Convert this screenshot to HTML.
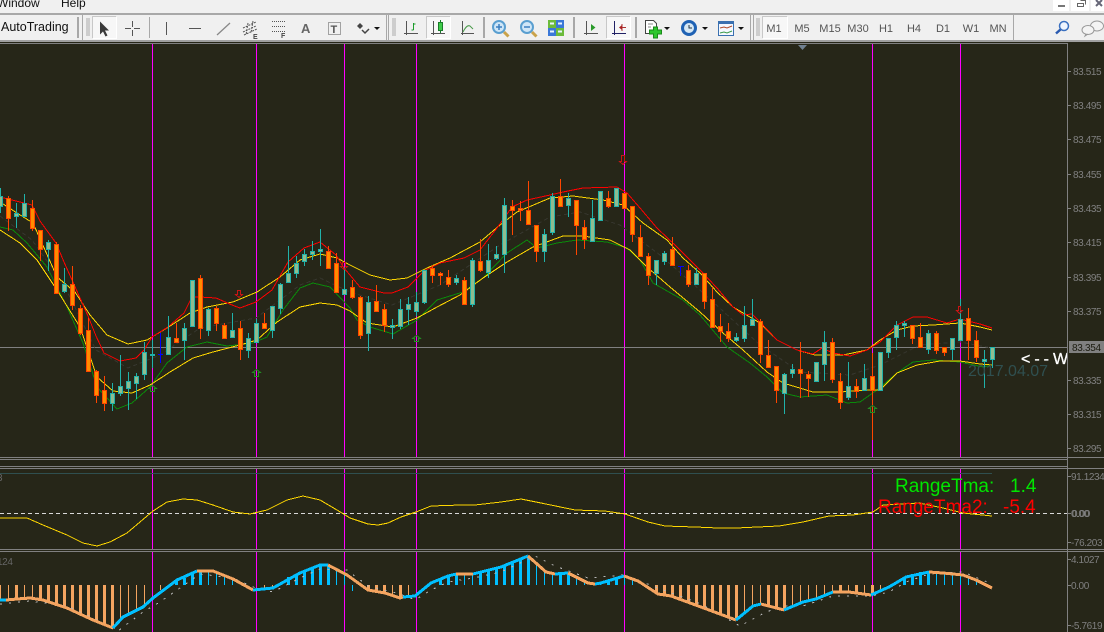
<!DOCTYPE html>
<html><head><meta charset="utf-8"><title>Chart</title>
<style>
html,body{margin:0;padding:0;background:#262618;overflow:hidden}
svg{display:block;position:absolute;left:0;top:0}
text{font-family:"Liberation Sans",sans-serif}
.ax{font-size:10px;fill:#808080;letter-spacing:-.4px}
.tf{font-size:11px;fill:#555}
</style></head><body>
<svg width="1104" height="632" viewBox="0 0 1104 632" xmlns="http://www.w3.org/2000/svg">
<defs><clipPath id="cc"><rect x="0" y="44" width="1067" height="414"/></clipPath></defs>
<rect width="1104" height="632" fill="#262618"/>
<!-- top chrome -->
<rect width="1104" height="41" fill="#f0f0f0"/>
<rect y="13" width="1104" height="2" fill="#a8a8a8"/>
<rect y="40" width="1104" height="2" fill="#a0a0a0"/>
<rect x="0" y="43" width="1068" height="1" fill="#808080"/>
<rect x="1053" y="0" width="16" height="11" fill="#fff"/><rect x="1071" y="0" width="18" height="11" fill="#fff"/><rect x="1091" y="0" width="13" height="11" fill="#fff"/>
<rect x="1058" y="5" width="7" height="2" fill="#777"/>
<path d="M1077.5 3.5h6v3h-6zM1080.5 .5h5v4" fill="none" stroke="#666"/>
<path d="M1096 0l6 6M1102 0l-6 6" stroke="#667" stroke-width="2"/>
<text x="-3" y="7" font-size="12" fill="#111">Window</text>
<text x="61" y="7" font-size="12" fill="#111">Help</text>
<text x="1" y="31" font-size="12.5" fill="#111">AutoTrading</text>
<g fill="#a8a8a8"><rect x="77" y="17" width="2" height="21"/><rect x="82" y="15" width="1" height="25"/><rect x="149" y="17" width="1" height="21"/><rect x="386" y="15" width="1" height="25"/><rect x="388" y="15" width="1" height="25"/><rect x="483" y="17" width="2" height="21"/><rect x="573" y="17" width="2" height="21"/><rect x="635" y="17" width="2" height="21"/><rect x="750" y="15" width="1" height="25"/><rect x="753" y="15" width="1" height="25"/><rect x="1013" y="15" width="1" height="25"/></g>
<path d="M86 19h4M86 21h4M86 23h4M86 25h4M86 27h4M86 29h4M86 31h4M86 33h4M86 35h4M392 19h4M392 21h4M392 23h4M392 25h4M392 27h4M392 29h4M392 31h4M392 33h4M392 35h4M756 19h4M756 21h4M756 23h4M756 25h4M756 27h4M756 29h4M756 31h4M756 33h4M756 35h4" stroke="#aaa" stroke-width="1"/>
<g fill="#f7f7f7"><rect x="92" y="16" width="25" height="23"/><rect x="426" y="16" width="25" height="23"/><rect x="606" y="16" width="25" height="23"/><rect x="762" y="16" width="26" height="23"/></g>
<path d="M92.500 38.500v-22h24M426.500 38.500v-22h24M606.500 38.500v-22h24M762.500 38.500v-22h25" fill="none" stroke="#c8c8c8"/>
<path d="M116.500 16.500v22h-24M450.500 16.500v22h-24M630.500 16.500v22h-24M787.500 16.500v22h-25" fill="none" stroke="#fff"/>
<!-- drawing tool icons -->
<path d="M100 21.500v13l3-3 2.500 5 2-1-2.500-5h4z" fill="#3a3a3a"/>
<path d="M125 28.500h6M134 28.500h6M132.500 21v6M132.500 30v6M166.500 22v13M189 28.500h12" stroke="#555" fill="none"/>
<path d="M217 35l13-12" stroke="#888" stroke-width="1.300" fill="none"/>
<path d="M243 28l13-6M243 32l13-6M244 35l13-6M248 23l-2 12M253 21l-2 12" stroke="#555" stroke-dasharray="2 1" fill="none"/>
<text x="253" y="39" font-size="7" font-weight="bold" fill="#444">E</text>
<path d="M272 21.500h13M272 26.500h13M272 31.500h13" stroke="#555" stroke-dasharray="1 1" fill="none"/>
<text x="281" y="38" font-size="7" font-weight="bold" fill="#444">F</text>
<text x="301" y="33" font-size="13" font-weight="bold" fill="#666">A</text>
<rect x="328.500" y="22.500" width="12" height="12" fill="none" stroke="#555" stroke-dasharray="1 1"/>
<text x="330.500" y="33" font-size="11" font-weight="bold" fill="#555">T</text>
<path d="M360 23l3 3-3 3-3-3z" fill="#444"/><path d="M362 30l3 3 4-4" fill="none" stroke="#444" stroke-width="1.500"/>
<path d="M374 27h6l-3 3z" fill="#111"/>
<!-- chart mode icons -->
<g stroke="#555" fill="none"><path d="M406.500 21v14M404 33.500h14M433.500 21v14M431 33.500h14M462.500 21v14M461 33.500h13M586.500 21v14M584 33.500h14"/></g>
<path d="M413.500 23v7M413.500 24h2M411.500 30h2" stroke="#1a9c2a" fill="none"/>
<path d="M440.500 20v3M440.500 31v2" stroke="#1a7c2a"/><rect x="438.500" y="22.500" width="4" height="8" fill="#3fcc4a" stroke="#1a7c2a"/>
<path d="M463 32c3-6 5-7 7-6l3 3" stroke="#4a9a4a" fill="none"/>
<path d="M591 24l4.500 3.500-4.500 3.500z" fill="#2a9a2a"/>
<path d="M614.500 21v14M612 33.500h14" stroke="#226" fill="none"/><path d="M622 24v7M622 27.500h4" stroke="#a33"/><path d="M622 25l-3 2.500 3 2.500z" fill="#a22"/>
<!-- zoom icons -->
<g><circle cx="499" cy="27" r="6" fill="#cfe6f7" stroke="#5a9fd0" stroke-width="2"/><path d="M504 32l4.500 4.500" stroke="#c9a24a" stroke-width="3"/><path d="M496 27h6M499 24v6" stroke="#3a7fc0" stroke-width="1.500"/>
<circle cx="527" cy="27" r="6" fill="#cfe6f7" stroke="#5a9fd0" stroke-width="2"/><path d="M532 32l4.500 4.500" stroke="#c9a24a" stroke-width="3"/><path d="M524 27h6" stroke="#3a7fc0" stroke-width="1.500"/></g>
<g><rect x="548" y="20" width="8" height="8" fill="#6cbb3c"/><rect x="556" y="20" width="8" height="8" fill="#3a78d8"/><rect x="548" y="28" width="8" height="8" fill="#3a78d8"/><rect x="556" y="28" width="8" height="8" fill="#6cbb3c"/><path d="M550 23.500h4M558 23.500h4M550 31.500h4M558 31.500h4" stroke="#e8f4ff" stroke-width="2"/></g>
<!-- new/clock/template -->
<path d="M645.500 20.500h8l3 3v10h-11z" fill="#fff" stroke="#444"/><path d="M648 24h5M648 27h3" stroke="#888"/>
<path d="M653.500 27h4v3h4v4h-4v4h-4v-4h-4v-4h4z" fill="#2fc72f" stroke="#1a8a1a"/>
<path d="M664 27h6l-3 3z" fill="#111"/>
<circle cx="689" cy="28" r="8" fill="#1f62b4"/><circle cx="689" cy="28" r="5" fill="#d6e8f5"/><path d="M689 25v3h3" stroke="#234" fill="none"/>
<path d="M702 27h6l-3 3z" fill="#111"/>
<rect x="718.500" y="21.500" width="15" height="14" fill="#f4f8ff" stroke="#3a70b0"/><rect x="719" y="22" width="14" height="2" fill="#3a70b0"/>
<path d="M720 28l4-1 3 1 5-2" stroke="#b04a2a" fill="none"/><path d="M720 33l4-1 3 1 5-2" stroke="#3a9a4a" fill="none"/>
<path d="M738 27h6l-3 3z" fill="#111"/>
<!-- timeframe labels -->
<text class="tf" x="774" y="32" text-anchor="middle">M1</text>
<text class="tf" x="802" y="32" text-anchor="middle">M5</text>
<text class="tf" x="830" y="32" text-anchor="middle">M15</text>
<text class="tf" x="858" y="32" text-anchor="middle">M30</text>
<text class="tf" x="886" y="32" text-anchor="middle">H1</text>
<text class="tf" x="914" y="32" text-anchor="middle">H4</text>
<text class="tf" x="943" y="32" text-anchor="middle">D1</text>
<text class="tf" x="971" y="32" text-anchor="middle">W1</text>
<text class="tf" x="998" y="32" text-anchor="middle">MN</text>
<ellipse cx="1064" cy="26" rx="4.500" ry="4.500" fill="#eef5ff" stroke="#3a70c0" stroke-width="1.500"/><path d="M1060.500 29.500l-4.500 4" stroke="#2a5ab0" stroke-width="2.500"/>
<ellipse cx="1097" cy="26" rx="6.500" ry="5" fill="#f4f4f4" stroke="#999"/><ellipse cx="1088" cy="30" rx="6" ry="4.500" fill="#f4f4f4" stroke="#999"/><path d="M1086 34l-1 2 3-2" fill="none" stroke="#999"/>
<!-- panels -->
<rect x="0" y="44" width="1104" height="588" fill="#262618"/>
<rect y="43" width="1068" height="1" fill="#808080"/>
<path d="M798 45h9l-4.500 5z" fill="#708090"/>
<g shape-rendering="crispEdges">
<!-- magenta period separators -->
<path d="M152.500 44V458M256.500 44V458M344.500 44V458M416.500 44V458M624.500 44V458M872.500 44V458M960.500 44V458M152.500 469V549M256.500 469V549M344.500 469V549M416.500 469V549M624.500 469V549M872.500 469V549M960.500 469V549M152.500 552V632M256.500 552V632M344.500 552V632M416.500 552V632M624.500 552V632M872.500 552V632M960.500 552V632" stroke="#ff00ff" fill="none"/>
<!-- frames -->
<path d="M1067.500 43V632" stroke="#808080" fill="none"/>
<path d="M0 457.500H1104M0 459.500H1067M0 466.500H1067M0 468.500H1104M0 549.500H1104M0 551.500H1104" stroke="#808080" fill="none"/>
<path d="M0 473.500H992" stroke="#2f4f4f" fill="none"/>
<path d="M1067 71.500h4M1067 105.500h4M1067 139.500h4M1067 174.500h4M1067 208.500h4M1067 242.500h4M1067 277.500h4M1067 311.500h4M1067 380.500h4M1067 414.500h4M1067 448.500h4M1067 476.500h4M1067 513.500h4M1067 542.500h4M1067 559.500h4M1067 585.500h4M1067 625.500h4" stroke="#808080" fill="none"/>
<!-- bid line -->
<path d="M0 347.500H1067" stroke="#808080" fill="none"/>
<!-- faint mid line -->
<path d="M0 216L32 240 64 285 96 350 128 368 160 355 200 328 256 318 300 285 320 278 350 292 392 305 440 285 500 245 550 217 580 212 620 225 660 255 700 290 760 345 800 372 850 375 880 365 920 345 960 342 992 348" fill="none" stroke="#36362e" stroke-dasharray="4 3"/>
<!-- green MA -->
<polyline fill="none" stroke="#0a8a0a" points="0,227 13,230 27,243 47,267 67,307 83,343 97,387 117,409 132,403 150,387 167,363 187,347 207,342 227,346 253,343 267,337 283,310 300,288 313,283 330,287 350,308 357,320 370,327 393,334 417,320 437,300 463,292 483,278 507,253 527,240 537,248 557,243 577,240 607,242 627,248 640,260 653,283 683,300 700,315 727,347 750,363 767,377 783,393 800,397 827,395 847,403 860,402 877,390 897,373 913,362 933,360 960,362 983,367 992,365"/>
<!-- yellow MAs -->
<polyline fill="none" stroke="#ffd700" points="0,230 20,243 37,260 57,290 80,327 97,377 113,391 132,393 150,385 170,372 193,358 213,352 240,345 257,340 277,322 300,307 320,303 337,305 350,311 367,323 393,327 417,318 437,307 460,295 483,278 507,262 533,247 563,236 583,236 610,240 630,250 647,267 670,287 700,312 723,333 743,350 767,372 783,383 813,392 840,392 867,390 880,390 897,373 917,365 940,361 960,361 980,364 992,365"/>
<polyline fill="none" stroke="#ffd700" points="0,202 17,213 33,223 57,277 75,292 90,315 107,335 128,344 147,340 167,328 190,313 207,307 233,302 257,292 280,277 300,260 320,254 337,258 350,265 370,275 390,280 407,278 427,268 450,258 480,242 500,225 517,212 550,198 573,196 603,200 623,205 643,223 667,240 683,258 700,273 717,292 733,307 760,323 777,340 797,350 815,355 843,355 867,350 880,340 897,330 913,326 933,325 960,323 980,327 992,330"/>
<!-- red MA -->
<polyline fill="none" stroke="#ff0000" points="0,197 16,201 32,205 40,221 56,243 64,262 72,280 88,316 96,336 104,353 120,361 136,358 144,350 152,337 168,327 184,313 192,297 200,297 216,298 232,305 240,308 256,302 272,290 288,262 304,248 320,242 336,255 344,268 360,287 384,293 392,293 408,287 424,271 440,263 464,258 480,250 497,228 512,207 527,200 550,195 563,192 583,188 617,187 627,193 640,208 657,228 677,247 700,270 717,288 733,307 743,315 752,314 760,322 777,340 797,350 813,354 822,348 833,353 850,356 867,350 880,342 897,325 913,317 927,317 947,323 960,319 980,324 992,328"/>
<!-- candle wicks -->
<path stroke="#20b2aa" fill="none" d="M.5 188V213M16.500 203V228M24.500 194V216M48.500 240V271M64.500 268V293M112.500 383V411M120.500 355V396M128.500 372V410M136.500 373V399M144.500 342V380M152.500 340V368M168.500 316V354M184.500 323V360M192.500 280V326M208.500 308V336M232.500 313V337M248.500 333V358M256.500 319V342M272.500 306V338M280.500 283V314M288.500 246V282M296.500 256V278M304.500 249V266M312.500 241V260M320.500 229V266M344.500 267V294M368.500 296V351M392.500 319V339M400.500 299V329M408.500 297V325M416.500 292V316M424.500 270V304M456.500 275V285M472.500 258V307M488.500 244V278M496.500 246V260M504.500 198V273M544.500 229V262M552.500 193V235M568.500 193V217M592.500 200V241M600.500 191V220M616.500 188V206M656.500 260V285M664.500 251V265M696.500 268V284M736.500 333V342M744.500 306V342M752.500 299V325M784.500 373V414M792.500 364V378M816.500 362V381M824.500 331V381M848.500 362V400M864.500 364V390M880.500 352V390M888.500 338V358M896.500 321V350M904.500 321V337M928.500 330V354M952.500 338V360M960.500 299V340M984.500 350V388M992.500 347V368"/>
<path stroke="#ff4500" fill="none" d="M8.500 196V231M32.500 200V231M40.500 230V261M56.500 242V293M72.500 266V310M80.500 305V335M88.500 318V371M96.500 370V403M104.500 376V411M176.500 323V343M200.500 275V339M216.500 306V331M224.500 323V338M240.500 321V360M264.500 313V328M328.500 246V268M336.500 253V292M352.500 280V299M360.500 296V339M376.500 285V311M384.500 304V332M432.500 265V283M440.500 272V285M448.500 270V287M464.500 277V304M480.500 239V272M512.500 200V235M520.500 201V221M528.500 181V224M536.500 225V262M560.500 179V206M576.500 200V255M584.500 220V249M608.500 191V208M624.500 193V208M632.500 206V242M640.500 225V256M648.500 253V285M672.500 237V265M688.500 265V287M704.500 273V309M712.500 287V327M720.500 314V342M728.500 323V342M760.500 319V363M768.500 340V367M776.500 366V403M800.500 342V398M808.500 371V397M832.500 338V383M840.500 373V409M856.500 379V398M872.500 353V440M912.500 325V344M920.500 323V347M936.500 331V354M944.500 347V356M968.500 308V360M976.500 331V362"/>
<!-- candle bodies -->
<path stroke="#20b2aa" fill="#8fbc8f" d="M-1.500 196.500h4V206.500h-4zM14.500 213.500h4V216.500h-4zM22.500 203.500h4V216.500h-4zM46.500 242.500h4V249.500h-4zM62.500 284.500h4V291.500h-4zM110.500 393.500h4V403.500h-4zM118.500 386.500h4V393.500h-4zM126.500 381.500h4V388.500h-4zM134.500 376.500h4V383.500h-4zM142.500 352.500h4V374.500h-4zM150.500 354.500h4V355.500h-4zM166.500 337.500h4V354.500h-4zM182.500 328.500h4V340.500h-4zM190.500 280.500h4V326.500h-4zM206.500 309.500h4V330.500h-4zM230.500 330.500h4V337.500h-4zM246.500 338.500h4V350.500h-4zM254.500 323.500h4V342.500h-4zM270.500 306.500h4V330.500h-4zM278.500 284.500h4V308.500h-4zM286.500 273.500h4V282.500h-4zM294.500 263.500h4V273.500h-4zM302.500 254.500h4V261.500h-4zM310.500 251.500h4V254.500h-4zM318.500 249.500h4V251.500h-4zM342.500 289.500h4V294.500h-4zM366.500 302.500h4V333.500h-4zM390.500 325.500h4V327.500h-4zM398.500 309.500h4V326.500h-4zM406.500 304.500h4V309.500h-4zM414.500 302.500h4V311.500h-4zM422.500 270.500h4V302.500h-4zM454.500 278.500h4V282.500h-4zM470.500 260.500h4V304.500h-4zM486.500 260.500h4V272.500h-4zM494.500 254.500h4V258.500h-4zM502.500 205.500h4V254.500h-4zM542.500 234.500h4V251.500h-4zM550.500 196.500h4V232.500h-4zM566.500 198.500h4V205.500h-4zM590.500 218.500h4V241.500h-4zM598.500 191.500h4V220.500h-4zM614.500 188.500h4V206.500h-4zM654.500 260.500h4V273.500h-4zM662.500 253.500h4V261.500h-4zM694.500 273.500h4V284.500h-4zM734.500 337.500h4V340.500h-4zM742.500 325.500h4V338.500h-4zM750.500 319.500h4V325.500h-4zM782.500 374.500h4V393.500h-4zM790.500 369.500h4V373.500h-4zM814.500 362.500h4V381.500h-4zM822.500 342.500h4V364.500h-4zM846.500 386.500h4V397.500h-4zM862.500 378.500h4V390.500h-4zM878.500 352.500h4V390.500h-4zM886.500 338.500h4V352.500h-4zM894.500 325.500h4V337.500h-4zM902.500 323.500h4V325.500h-4zM926.500 333.500h4V349.500h-4zM950.500 338.500h4V349.500h-4zM958.500 319.500h4V340.500h-4zM982.500 359.500h4V361.500h-4zM990.500 347.500h4V359.500h-4z"/>
<path stroke="#ff4500" fill="#ff8c00" d="M6.500 198.500h4V218.500h-4zM30.500 208.500h4V228.500h-4zM38.500 230.500h4V249.500h-4zM54.500 244.500h4V293.500h-4zM70.500 284.500h4V305.500h-4zM78.500 308.500h4V333.500h-4zM86.500 330.500h4V371.500h-4zM94.500 371.500h4V395.500h-4zM102.500 390.500h4V403.500h-4zM174.500 338.500h4V342.500h-4zM198.500 278.500h4V328.500h-4zM214.500 308.500h4V323.500h-4zM222.500 325.500h4V338.500h-4zM238.500 328.500h4V349.500h-4zM262.500 323.500h4V328.500h-4zM326.500 251.500h4V268.500h-4zM334.500 263.500h4V292.500h-4zM350.500 287.500h4V297.500h-4zM358.500 297.500h4V335.500h-4zM374.500 301.500h4V311.500h-4zM382.500 309.500h4V325.500h-4zM430.500 268.500h4V275.500h-4zM438.500 273.500h4V275.500h-4zM446.500 277.500h4V284.500h-4zM462.500 280.500h4V304.500h-4zM478.500 261.500h4V270.500h-4zM510.500 206.500h4V210.500h-4zM518.500 208.500h4V210.500h-4zM526.500 210.500h4V224.500h-4zM534.500 225.500h4V251.500h-4zM558.500 196.500h4V206.500h-4zM574.500 200.500h4V225.500h-4zM582.500 227.500h4V239.500h-4zM606.500 198.500h4V206.500h-4zM622.500 193.500h4V208.500h-4zM630.500 206.500h4V234.500h-4zM638.500 237.500h4V256.500h-4zM646.500 256.500h4V275.500h-4zM670.500 249.500h4V265.500h-4zM686.500 270.500h4V284.500h-4zM702.500 273.500h4V301.500h-4zM710.500 299.500h4V327.500h-4zM718.500 326.500h4V331.500h-4zM726.500 331.500h4V338.500h-4zM758.500 321.500h4V354.500h-4zM766.500 355.500h4V367.500h-4zM774.500 366.500h4V390.500h-4zM798.500 369.500h4V373.500h-4zM806.500 374.500h4V378.500h-4zM830.500 342.500h4V379.500h-4zM838.500 381.500h4V402.500h-4zM854.500 386.500h4V391.500h-4zM870.500 376.500h4V390.500h-4zM910.500 325.500h4V338.500h-4zM918.500 337.500h4V347.500h-4zM934.500 333.500h4V350.500h-4zM942.500 347.500h4V352.500h-4zM966.500 318.500h4V340.500h-4zM974.500 340.500h4V357.500h-4z"/>
<!-- blue doji -->
<path stroke="#0000ff" fill="none" d="M160.500 333V363M158 354.500h5M680.500 266V276M678 266.500h6"/>
<!-- arrows -->
<path fill="none" stroke="#228b22" stroke-width="1" d="M148.500 388.500l4-3 4 3h-2v3h-4v-3zM252.500 372.500l4-3 4 3h-2v4h-4v-4zM412.500 338.500l4-3 4 3h-2v3h-4v-3zM868.500 408.500l4-3 4 3h-2v4h-4v-4z"/>
<path fill="none" stroke="#c81414" stroke-width="1" d="M237.500 290.500h3v4h2l-3.500 3-3.500-3h2zM342.500 262.500h3v4h2l-3.500 3-3.500-3h2zM621.500 155.500h3v6h2l-3.500 3-3.500-3h2zM958.500 306.500h2v4h2l-3 3-3-3h2z"/>
<!-- panel 2 -->
<path d="M0 513.500H1067" stroke="#d8d8d8" stroke-dasharray="4 3" fill="none"/>
<polyline fill="none" stroke="#ffd700" points="0,518 27,518 43,525 67,535 83,543 97,546 110,542 127,533 140,522 153,511 167,502 183,499 197,500 213,505 233,512 250,514 267,510 287,500 303,496 320,500 337,510 350,518 368,524 378,525 388,523 401,517 416,512 431,506 461,505 475,505 501,502 521,499 541,503 575,510 605,511 625,514 648,522 665,526 695,527 718,528 736,528 779,526 803,522 829,516 853,515 873,512 883,505 919,503 943,508 963,513 992,516"/>
<!-- histogram -->
<path stroke="#f4a460" stroke-width="3" fill="none" d="M16.500 585V600M40.500 585V600M48.500 585V603M56.500 585V606M64.500 585V607M72.500 585V610M80.500 585V613M88.500 585V618M96.500 585V621M104.500 585V625M112.500 585V628M368.500 585V590M376.500 585V592M384.500 585V593M400.500 585V598M656.500 585V593M664.500 585V595M672.500 585V596M680.500 585V598M688.500 585V602M696.500 585V605M704.500 585V608M712.500 585V612M720.500 585V615M728.500 585V617M736.500 585V620M768.500 585V606M776.500 585V608M784.500 585V610M840.500 585V592M856.500 585V593M872.500 585V595"/>
<path stroke="#f4a460" fill="none" d="M.5 585V600M8.500 585V600M24.500 585V599M32.500 585V598M120.500 585V620M128.500 585V615M136.500 585V611M144.500 585V606M160.500 585V590M264.500 585V589M272.500 585V588M392.500 585V594M408.500 585V597M744.500 585V613M752.500 585V607M760.500 585V604M792.500 585V607M800.500 585V603M808.500 585V601M816.500 585V599M824.500 585V596M832.500 585V592M848.500 585V592M864.500 585V594M880.500 585V592"/>
<path stroke="#00bfff" stroke-width="3" fill="none" d="M176.500 585V580M184.500 585V578M192.500 585V573M200.500 585V571M288.500 585V577M296.500 585V574M304.500 585V571M312.500 585V568M320.500 585V565M328.500 585V565M440.500 585V578M448.500 585V576M456.500 585V574M480.500 585V572M488.500 585V570M496.500 585V568M504.500 585V566M512.500 585V562M520.500 585V558M528.500 585V556M560.500 585V574M568.500 585V573M608.500 585V581M616.500 585V578M904.500 585V578M912.500 585V574M920.500 585V572M928.500 585V572"/>
<path stroke="#00bfff" fill="none" d="M208.500 585V571M216.500 585V572M224.500 585V575M232.500 585V579M336.500 585V568M344.500 585V574M352.500 585V591M464.500 585V574M472.500 585V574M536.500 585V562M544.500 585V570M552.500 585V574M576.500 585V578M584.500 585V582M592.500 585V584M600.500 585V583M624.500 585V576M632.500 585V578M936.500 585V573M944.500 585V573M952.500 585V574M960.500 585V575M968.500 585V577M976.500 585V580"/>
<!-- signal dashes -->
<polyline fill="none" stroke="#b8b8b8" stroke-dasharray="2 7" points="0,604 30,601 67,606 93,618 118,631 143,612 160,602 177,590 200,574 233,578 253,587 273,592 300,578 320,569 347,570 368,586 400,594 415,600 431,590 448,582 473,578 501,572 535,556 555,566 588,578 624,575 658,588 701,604 740,626 766,612 784,606 803,606 833,596 871,596 889,592 906,582 929,574 963,572 992,584"/>
<!-- thick line segments -->
<g fill="none" stroke-width="3" stroke-linejoin="round">
<polyline stroke="#00bfff" points="0,600 6,600"/>
<polyline stroke="#f4a460" points="6,600 17,599 30,598 43,600 67,608 93,620 113,628"/>
<polyline stroke="#00bfff" points="113,628 123,617 143,607 153,598 177,580 197,571"/>
<polyline stroke="#f4a460" points="197,571 213,571 233,579 253,590"/>
<polyline stroke="#00bfff" points="253,590 273,588 300,573 320,565 328,565"/>
<polyline stroke="#f4a460" points="328,565 347,575 368,590 385,593 400,598 403,597"/>
<polyline stroke="#00bfff" points="403,597 415,596 431,583 448,576 456,574"/>
<polyline stroke="#f4a460" points="456,574 473,574"/>
<polyline stroke="#00bfff" points="473,574 501,567 528,556"/>
<polyline stroke="#f4a460" points="528,556 546,572 555,574"/>
<polyline stroke="#00bfff" points="555,574 568,573"/>
<polyline stroke="#f4a460" points="568,573 588,583 595,584"/>
<polyline stroke="#00bfff" points="595,584 601,583 624,576"/>
<polyline stroke="#f4a460" points="624,576 638,581 658,594 671,596 701,607 736,620"/>
<polyline stroke="#00bfff" points="736,620 753,606 761,604"/>
<polyline stroke="#f4a460" points="761,604 784,610"/>
<polyline stroke="#00bfff" points="784,610 803,602 816,599 833,592"/>
<polyline stroke="#f4a460" points="833,592 849,592 871,595"/>
<polyline stroke="#00bfff" points="871,595 889,587 906,577 929,572"/>
<polyline stroke="#f4a460" points="929,572 943,573 963,575 976,580 992,588"/>
</g>
</g>
<!-- price box -->
<rect x="1069" y="341" width="35" height="12" fill="#808080"/>
<text x="1072" y="351" font-size="10" fill="#1c1c10" letter-spacing="-.3">83.354</text>
<!-- axis labels -->
<text class="ax" x="1073" y="75">83.515</text>
<text class="ax" x="1073" y="109">83.495</text>
<text class="ax" x="1073" y="143">83.475</text>
<text class="ax" x="1073" y="178">83.455</text>
<text class="ax" x="1073" y="212">83.435</text>
<text class="ax" x="1073" y="246">83.415</text>
<text class="ax" x="1073" y="281">83.395</text>
<text class="ax" x="1073" y="315">83.375</text>
<text class="ax" x="1073" y="384">83.335</text>
<text class="ax" x="1073" y="418">83.315</text>
<text class="ax" x="1073" y="452">83.295</text>
<text class="ax" x="1071" y="480">91.1234</text>
<text class="ax" x="1071" y="517">0.00</text>
<text class="ax" x="1072" y="517">0.00</text>
<text class="ax" x="1071" y="546">-76.203</text>
<text class="ax" x="1071" y="563">4.1027</text>
<text class="ax" x="1071" y="589">0.00</text>
<text class="ax" x="1071" y="629">-5.7619</text>
<text class="ax" x="-3" y="481" style="fill:#666">3</text>
<text class="ax" x="-3" y="565" style="fill:#666">124</text>
<!-- overlay text -->
<text x="968" y="376" font-size="16" fill="#2f4f4f">2017.04.07</text>
<g clip-path="url(#cc)"><text x="1021" y="364" font-size="16" fill="#fff" stroke="#fff" stroke-width=".3" letter-spacing="4">&lt;--WA</text></g>
<text x="895" y="492" font-size="19" fill="#00e600">RangeTma:</text>
<text x="1010" y="492" font-size="19" fill="#00e600">1.4</text>
<text x="878" y="513" font-size="19" fill="#f00">RangeTma2:</text>
<text x="1003" y="513" font-size="19" fill="#f00">-5.4</text>
</svg>
</body></html>
